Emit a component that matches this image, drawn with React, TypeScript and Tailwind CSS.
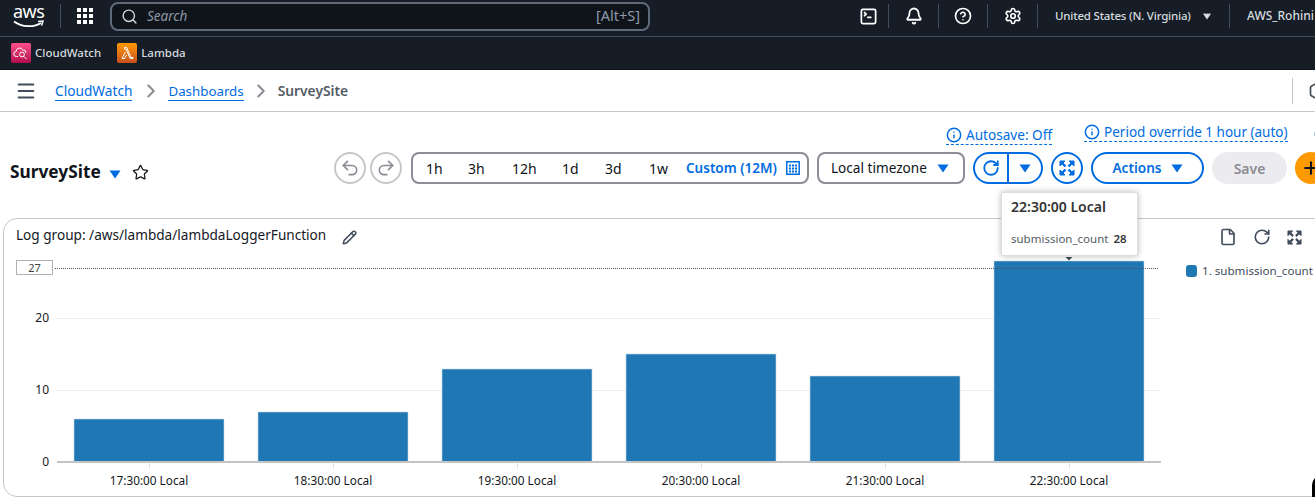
import { Bell, CircleHelp, File, Pencil, Plus, RotateCw, Search, Settings, SquareTerminal, Star, Undo2, Redo2, Info, ChevronRight, Menu, Hexagon } from "lucide-react"

const font = "font-['Noto_Sans',sans-serif]"

const ranges = [
  { label: "1h", w: "w-[42px]" },
  { label: "3h", w: "w-[44px]" },
  { label: "12h", w: "w-[50px]" },
  { label: "1d", w: "w-[43px]" },
  { label: "3d", w: "w-[44px]" },
  { label: "1w", w: "w-[37px]" },
]

const bars = [
  { x: 74, top: 419, label: "17:30:00 Local" },
  { x: 258, top: 412, label: "18:30:00 Local" },
  { x: 442, top: 369, label: "19:30:00 Local" },
  { x: 626, top: 354, label: "20:30:00 Local" },
  { x: 810, top: 376, label: "21:30:00 Local" },
  { x: 994, top: 261, label: "22:30:00 Local" },
]

function Caret({ className = "" }: { className?: string }) {
  return (
    <svg width="12" height="9" viewBox="0 0 12 9" className={className}>
      <path d="M0.5 0.5h11L6 8.5z" fill="currentColor" />
    </svg>
  )
}

function ExpandIcon({ size = 16 }: { size?: number }) {
  return (
    <svg width={size} height={size} viewBox="0 0 16 16" fill="currentColor" stroke="currentColor" strokeWidth="1">
      <path d="M1 1h5L1 6zM15 1v5l-5-5zM15 15h-5l5-5zM1 15v-5l5 5z" />
      <path d="M3 3l3.5 3.5M13 3L9.5 6.5M13 13L9.5 9.5M3 13l3.5-3.5" fill="none" strokeWidth="2.4" />
    </svg>
  )
}

function Divider() {
  return <div className="h-[24px] w-px bg-[#414d5c]" />
}

function TopBar() {
  return (
    <div className="flex h-[37px] items-center border-b border-[#414d5c] bg-[#161d26] pb-[4px] text-[#d5dbdb]">
      <div className="relative ml-[13px] h-[28px] w-[36px] shrink-0">
        <span className="absolute left-0 top-[-1px] text-[18px] leading-[20px] tracking-[-0.5px] text-white">aws</span>
        <svg width="32" height="10" viewBox="0 0 32 10" className="absolute left-0 top-[18px]">
          <path d="M1 1.5c8 6 20 6 27 1.5" fill="none" stroke="#fff" strokeWidth="1.7" />
          <path d="M25 1.5l5-.5-1.4 4.6" fill="none" stroke="#fff" strokeWidth="1.5" />
        </svg>
      </div>
      <div className="ml-[11px] h-[24px] w-px bg-[#414d5c]" />
      <div className="ml-[16px] grid w-[16px] shrink-0 grid-cols-3 gap-[2px]">
        {Array.from({ length: 9 }).map((_, i) => (
          <div key={i} className="h-[4px] w-[4px] bg-white" />
        ))}
      </div>
      <div className="ml-[17px] flex h-[29px] w-[540px] shrink-0 items-center rounded-[8px] border-2 border-[#5f6b7a] bg-[#0f141a] pl-[9px] pr-[8px]">
        <Search size={17} strokeWidth={2} className="text-[#d1d5db]" />
        <span className="ml-[9px] text-[13.5px] italic text-[#8d99a8]">Search</span>
        <span className="ml-auto text-[14.5px] text-[#8d99a8]">[Alt+S]</span>
      </div>
      <div className="ml-[206px] flex shrink-0 items-center">
        <div className="flex w-[32px] justify-start pl-[3px]"><SquareTerminal size={19} strokeWidth={2.2} className="text-white" /></div>
        <Divider />
        <div className="flex w-[49px] justify-center"><Bell size={18} strokeWidth={2.4} className="text-white" /></div>
        <Divider />
        <div className="flex w-[48px] justify-center"><CircleHelp size={18} strokeWidth={2.2} className="text-white" /></div>
        <Divider />
        <div className="flex w-[49px] justify-center"><Settings size={18} strokeWidth={2.2} className="text-white" /></div>
        <Divider />
        <div className="flex w-[191px] items-center whitespace-nowrap pl-[17px] text-[11.5px] font-medium tracking-[-0.2px] text-[#d5dbdf]">
          United States (N. Virginia)
          <Caret className="ml-[10px] scale-75 text-[#d5dbdf]" />
        </div>
        <Divider />
        <span className="ml-[17px] whitespace-nowrap text-[12px] font-medium text-[#d5dbdf]">AWS_Rohini</span>
      </div>
    </div>
  )
}

function FavoritesBar() {
  return (
    <div className="flex h-[33px] items-center border-b border-[#0f141a] bg-[#161d26] pl-[11px] text-[11.5px] font-medium text-[#d5dbdf]">
      <div className="flex h-[20px] w-[20px] items-center justify-center rounded-[2px] bg-gradient-to-t from-[#b0084d] to-[#ff4f8b]">
        <svg width="16" height="16" viewBox="0 0 16 16" fill="none" stroke="#fff" strokeWidth="1">
          <path d="M5 11.5H3.5a2.5 2.5 0 0 1-.4-5 3.5 3.5 0 0 1 6.6-1.6 3 3 0 0 1 3.3 3" />
          <circle cx="9" cy="9.5" r="2.4" />
          <path d="M11 11.5l2.5 2.5" />
        </svg>
      </div>
      <span className="ml-[4px]">CloudWatch</span>
      <div className="ml-[16px] flex h-[20px] w-[20px] items-center justify-center rounded-[2px] bg-gradient-to-t from-[#c8511b] to-[#ff9900]">
        <svg width="16" height="16" viewBox="0 0 16 16" fill="none" stroke="#fff" strokeWidth="1">
          <path d="M5.5 2.5h2.2l4.3 10h2v1h-2.8L7 4H5.5zM6.3 7L3 13.5h2.6L7.5 10" />
        </svg>
      </div>
      <span className="ml-[4px]">Lambda</span>
    </div>
  )
}

function Breadcrumbs() {
  return (
    <div className="flex h-[42px] items-center border-b border-[#c6c6cd] bg-white pl-[15px]">
      <Menu size={22} strokeWidth={2.2} className="shrink-0 text-[#414d5c]" />
      <a className="ml-[18px] mt-[2px] shrink-0 whitespace-nowrap border-b border-[#006ce0] text-[13.7px] leading-[18px] text-[#006ce0]">CloudWatch</a>
      <ChevronRight size={22} strokeWidth={2.2} className="ml-[8px] shrink-0 text-[#8c8c94]" />
      <a className="ml-[6px] mt-[2px] shrink-0 whitespace-nowrap border-b border-[#006ce0] text-[13.3px] leading-[18px] text-[#006ce0]">Dashboards</a>
      <ChevronRight size={22} strokeWidth={2.2} className="ml-[6px] shrink-0 text-[#8c8c94]" />
      <span className="ml-[6px] mt-[2px] shrink-0 whitespace-nowrap text-[13.8px] font-semibold text-[#545b64]">SurveySite</span>
      <div className="ml-[944px] h-[26px] w-px shrink-0 bg-[#c6c6cd]" />
      <Hexagon size={20} strokeWidth={2} className="ml-[15px] shrink-0 text-[#414d5c]" />
    </div>
  )
}

function Toolbar() {
  return (
    <div className="flex w-[1400px] flex-col">
      <div className="flex h-[40px] items-start text-[13.6px] text-[#006ce0]">
        <div className="ml-[946px] mt-[14px] flex items-center gap-[4px] whitespace-nowrap border-b border-dashed border-[#006ce0] leading-[18px]">
          <Info size={16} strokeWidth={2.2} />
          Autosave: Off
        </div>
        <div className="ml-[32px] mt-[11px] flex items-center gap-[4px] whitespace-nowrap border-b border-dashed border-[#006ce0] text-[13.5px] leading-[18px]">
          <Info size={16} strokeWidth={2.2} />
          Period override 1 hour (auto)
        </div>
        <div className="ml-[26px] mt-[14px]"><Info size={16} strokeWidth={2.2} /></div>
      </div>
      <div className="flex h-[32px] items-center">
        <div className="flex w-[334px] shrink-0 items-center pl-[10px] pt-[8px]">
          <span className="text-[17.3px] font-bold leading-[22px] text-[#0f141a]">SurveySite</span>
          <Caret className="ml-[8px] mt-[4px] text-[#006ce0]" />
          <Star size={17} strokeWidth={1.8} className="ml-[11px] text-[#16191f]" />
        </div>
        <div className="flex h-[32px] w-[32px] shrink-0 items-center justify-center rounded-full border-2 border-[#c6c6cd] text-[#8c8c94]">
          <Undo2 size={20} />
        </div>
        <div className="ml-[4px] flex h-[32px] w-[32px] shrink-0 items-center justify-center rounded-full border-2 border-[#c6c6cd] text-[#8c8c94]">
          <Redo2 size={20} />
        </div>
        <div className="ml-[9px] flex h-[32px] w-[398px] shrink-0 items-center rounded-[8px] border-2 border-[#8c8c94] pl-[13px] text-[14px] text-[#0f141a]">
          {ranges.map((r) => (
            <span key={r.label} className={r.w}>{r.label}</span>
          ))}
          <span className="whitespace-nowrap text-[13.5px] font-semibold text-[#006ce0]">Custom (12M)</span>
          <svg width="14" height="14" viewBox="0 0 14 14" className="ml-[9px] text-[#006ce0]">
            <path d="M.8.8h12.4v12.4H.8z" fill="none" stroke="currentColor" strokeWidth="1.5" />
            <path d="M3 3.5h2v2H3zM6 3.5h2v2H6zM9 3.5h2v2H9zM3 6.5h2v2H3zM6 6.5h2v2H6zM9 6.5h2v2H9zM3 9.5h2v2H3zM6 9.5h2v2H6zM9 9.5h2v2H9z" fill="currentColor" />
          </svg>
        </div>
        <div className="ml-[8px] flex h-[32px] w-[148px] shrink-0 items-center whitespace-nowrap rounded-[8px] border-2 border-[#8c8c94] pl-[12px] text-[13.6px] text-[#0f141a]">
          Local timezone
          <Caret className="ml-[10px] text-[#006ce0]" />
        </div>
        <div className="ml-[8px] flex h-[32px] w-[70px] shrink-0 items-center rounded-full border-2 border-[#006ce0] text-[#006ce0]">
          <div className="flex h-full w-[34px] items-center justify-center border-r-2 border-[#006ce0]">
            <RotateCw size={18} strokeWidth={2.4} />
          </div>
          <div className="flex flex-1 items-center justify-center"><Caret /></div>
        </div>
        <div className="ml-[8px] flex h-[32px] w-[32px] shrink-0 items-center justify-center rounded-full border-2 border-[#006ce0] text-[#006ce0]">
          <ExpandIcon />
        </div>
        <div className="ml-[8px] flex h-[32px] w-[113px] shrink-0 items-center justify-center gap-[9px] rounded-full border-2 border-[#006ce0] text-[13.6px] font-semibold text-[#006ce0]">
          Actions
          <Caret />
        </div>
        <div className="ml-[8px] flex h-[32px] w-[75px] shrink-0 items-center justify-center rounded-full bg-[#ebebf0] text-[14px] font-semibold text-[#8c8c94]">
          Save
        </div>
        <div className="ml-[8px] flex h-[32px] w-[32px] shrink-0 items-center justify-center rounded-full bg-[#ff9900] text-[#0f141a]">
          <Plus size={20} strokeWidth={2.5} />
        </div>
      </div>
    </div>
  )
}

function Chart() {
  return (
    <svg width="1200" height="240" viewBox="0 0 1200 240" className="block text-[#16191f]">
      {/* chart svg origin is page (0, 257) */}
      <g transform="translate(0 -257)">
        <line x1="55" x2="1161" y1="318.5" y2="318.5" stroke="#eeeeee" />
        <line x1="55" x2="1161" y1="390.5" y2="390.5" stroke="#eeeeee" />
        <rect x="16.5" y="260.5" width="36" height="14" fill="#fff" stroke="#b0b0b0" />
        <text x="34.5" y="272" textAnchor="middle" fontSize="11" fill="#444">27</text>
        <text x="49" y="322" textAnchor="end" fontSize="12" fill="#16191f">20</text>
        <text x="49" y="394" textAnchor="end" fontSize="12" fill="#16191f">10</text>
        <text x="49" y="466" textAnchor="end" fontSize="12" fill="#16191f">0</text>
        {bars.map((b) => (
          <g key={b.label}>
            <rect x={b.x} y={b.top} width="150" height={462 - b.top} fill="#1f77b4" stroke="#c5d9ea" strokeWidth="0.6" />
            <line x1={b.x + 75.5} x2={b.x + 75.5} y1="463" y2="468" stroke="#dddddd" />
            <text x={b.x + 75} y="485" textAnchor="middle" fontSize="11.8" fill="#16191f">{b.label}</text>
          </g>
        ))}
        <line x1="57" x2="1161" y1="462" y2="462" stroke="#c4c4c4" strokeWidth="2" />
        <line x1="55" x2="1159" y1="268.5" y2="268.5" stroke="#555" strokeDasharray="1 1" />
        <path d="M1064 255.5h10l-5 5z" fill="#414d5c" />
      </g>
    </svg>
  )
}

function Widget() {
  return (
    <div className="relative ml-[3px] mt-[34px] h-[279px] w-[1400px] rounded-[14px] border border-[#c6c6cd] bg-white">
      <div className="flex h-[38px] items-start pl-[12px] pt-[7px]">
        <span className="whitespace-nowrap text-[13.6px] leading-[18px] text-[#16191f]">Log group: /aws/lambda/lambdaLoggerFunction</span>
        <Pencil size={15} strokeWidth={2.4} className="ml-[16px] mt-[4px] text-[#414d5c]" />
      </div>
      <div className="-ml-[4px]">
        <Chart />
      </div>

      <div className="absolute left-[1215px] top-[9px] flex items-center gap-[16px] text-[#414d5c]">
        <File size={18} strokeWidth={2.2} />
        <RotateCw size={18} strokeWidth={2.2} />
        <ExpandIcon size={15} />
      </div>
      <div className="absolute left-[1182px] top-[43px] flex items-center gap-[5px] whitespace-nowrap text-[11.6px] text-[#414d5c]">
        <span className="h-[12px] w-[11px] rounded-[3px] bg-[#1f77b4]" />
        1. submission_count
      </div>

      <div className="absolute left-[997px] -top-[27px] h-[64px] w-[137px] rounded-[2px] border border-[#dddddd] bg-white pl-[9px] pt-[5px] shadow-[0_0_6px_rgba(0,0,0,0.28)]">
        <div className="whitespace-nowrap text-[14px] font-semibold leading-[18px] text-[#333]">22:30:00 Local</div>
        <div className="mt-[15px] flex items-center gap-[5px] whitespace-nowrap text-[11.5px] leading-[16px] text-[#545b64]">
          submission_count
          <span className="font-semibold text-[#333]">28</span>
        </div>
      </div>

      <div className="absolute left-[1308px] top-[256px] h-[40px] w-[20px] rounded-full border-l-[3px] border-black" />
    </div>
  )
}

export default function App() {
  return (
    <div className={`${font} h-[497px] w-[1315px] overflow-hidden bg-white`}>
      <TopBar />
      <FavoritesBar />
      <Breadcrumbs />
      <Toolbar />
      <Widget />
    </div>
  )
}
